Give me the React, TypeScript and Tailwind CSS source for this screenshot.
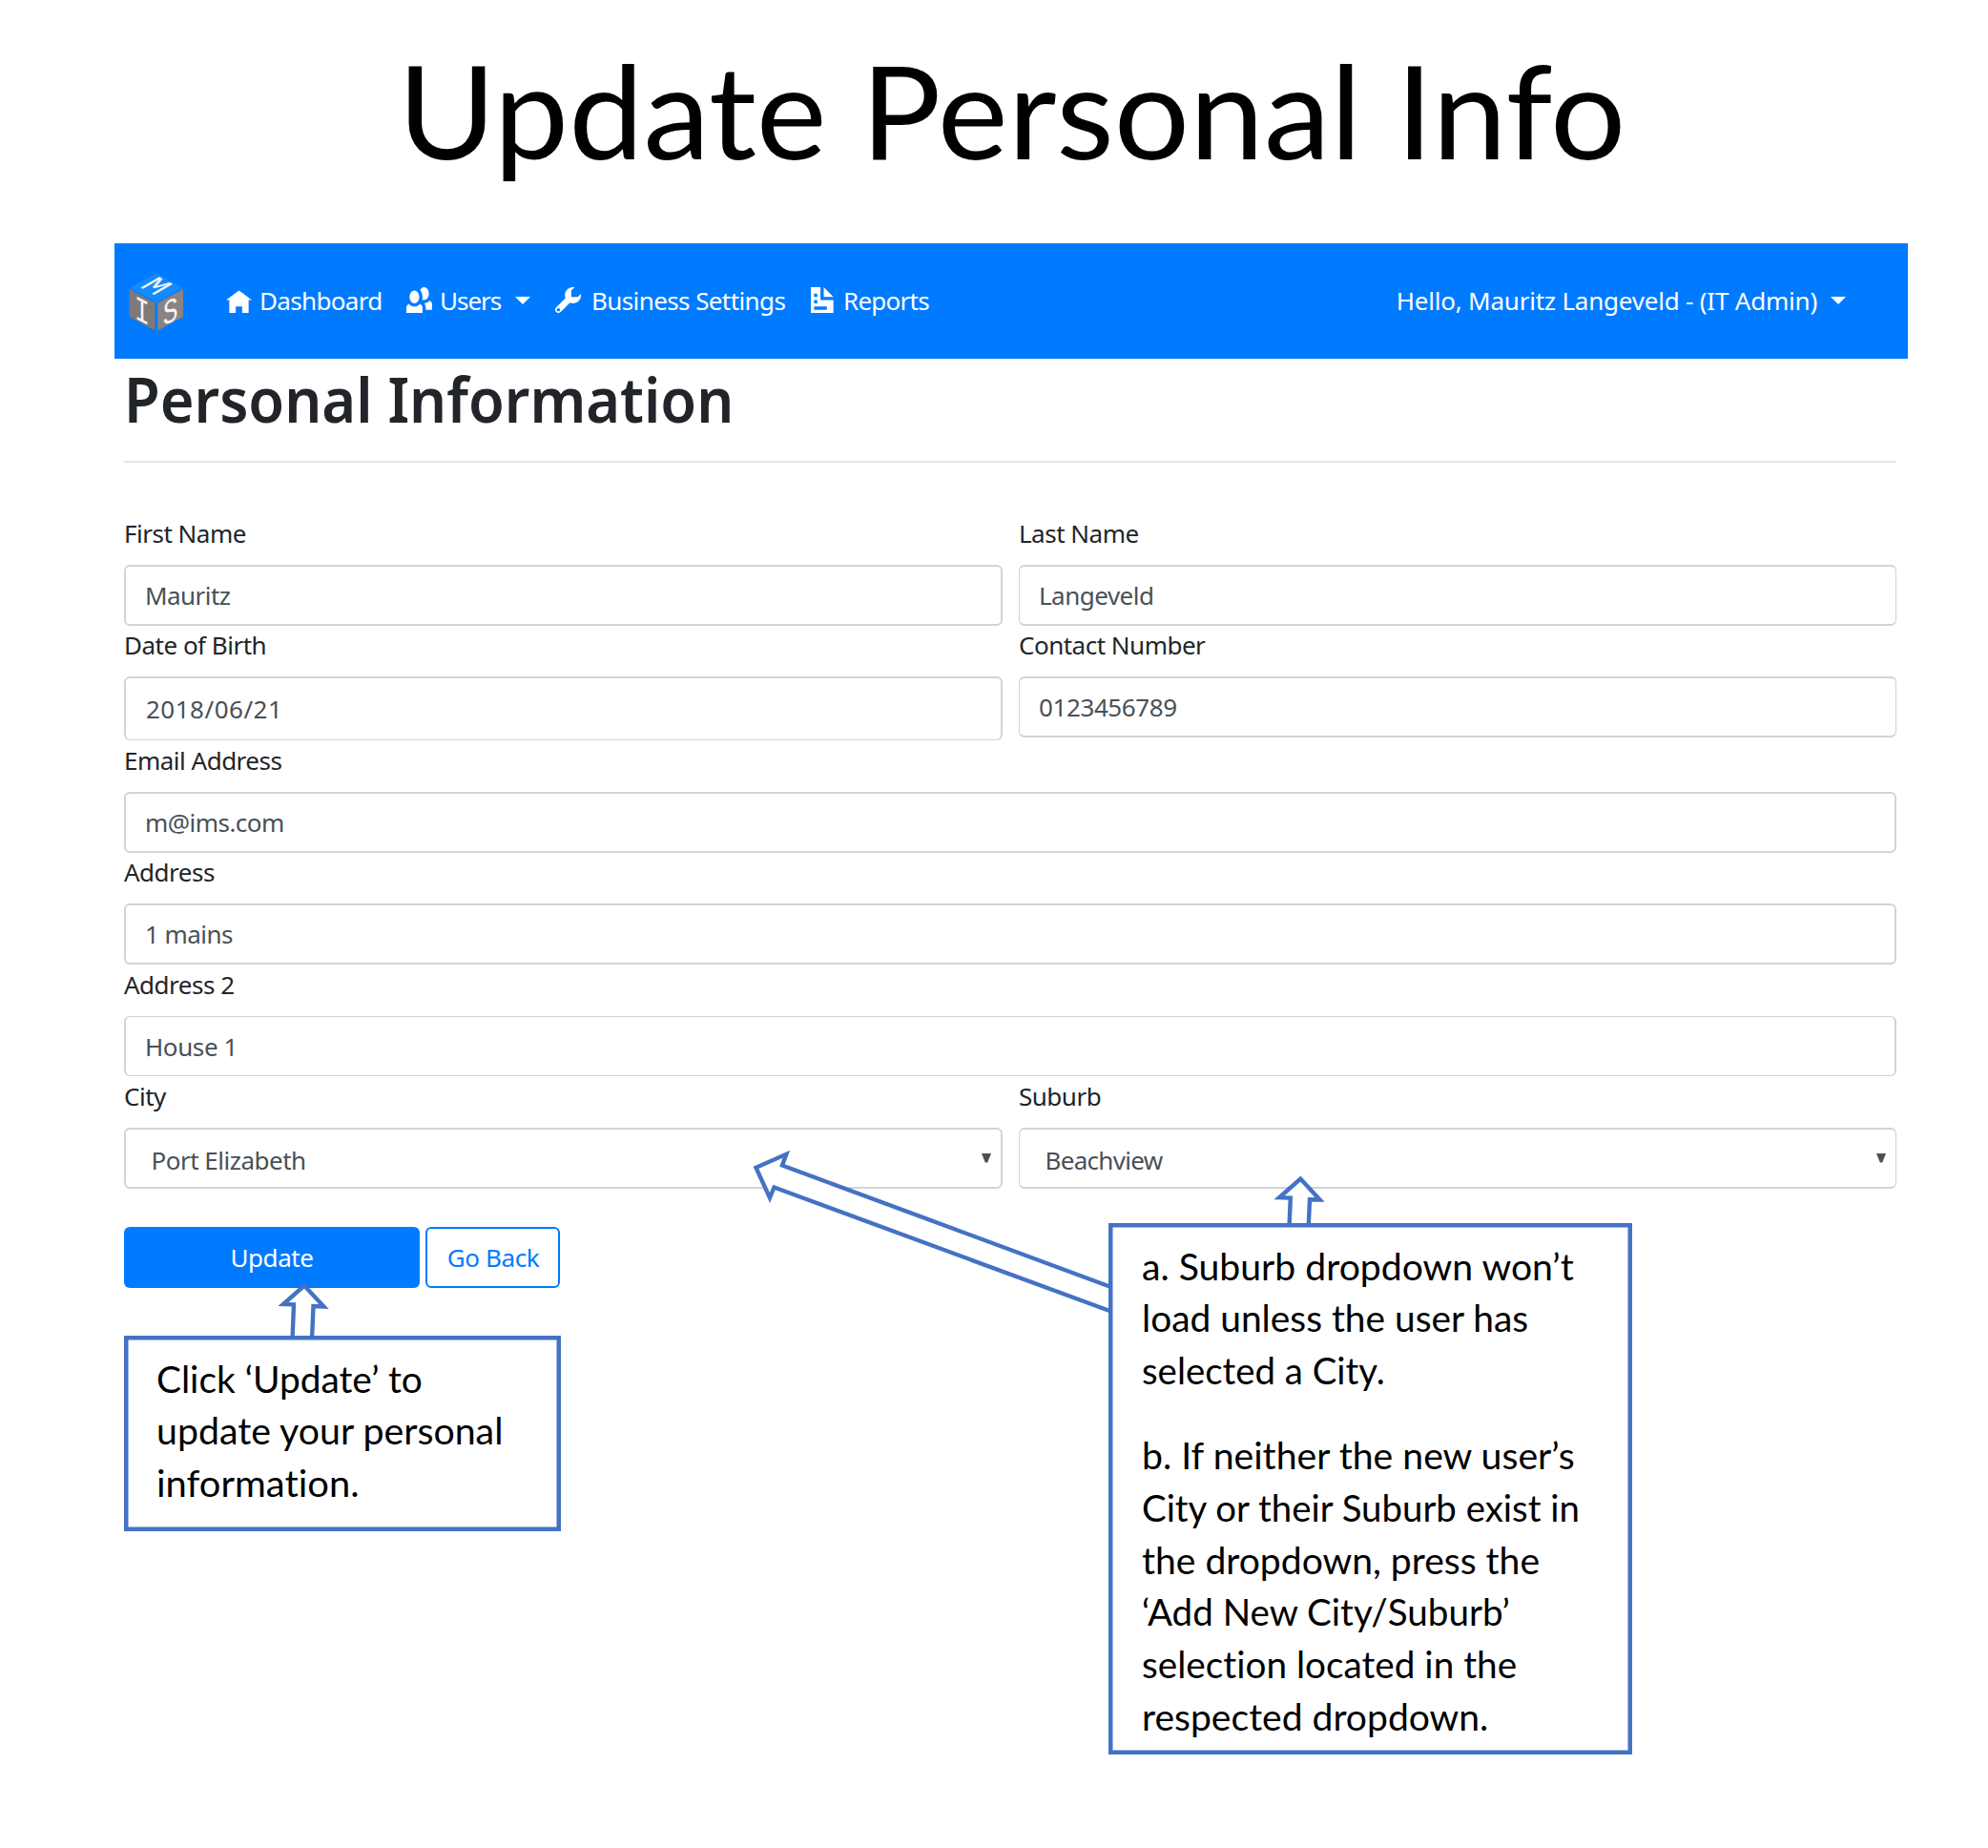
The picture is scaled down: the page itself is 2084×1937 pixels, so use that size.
import type { ReactNode } from "react";

function Glyph({ d, className }: { d: string; className: string }) {
  return (
    <svg viewBox="0 0 8 8" className={`h-[27px] w-[27px] shrink-0 fill-white ${className}`} aria-hidden="true">
      <path d={d} />
    </svg>
  );
}

const HOME = "M4 1l-4 3h1v4h2v-2h2v2h2v-4.03l1 .03-4-3z";
const PEOPLE =
  "M5.5 0c-.51 0-.95.35-1.22.88.45.54.72 1.28.72 2.13 0 .29-.03.55-.09.81.19.11.38.19.59.19.83 0 1.5-.9 1.5-2s-.67-2-1.5-2zm-3 1c-.83 0-1.5.9-1.5 2s.67 2 1.5 2 1.5-.9 1.5-2-.67-2-1.5-2zm4.75 3.16c-.43.51-1.02.82-1.69.84.27.38.44.84.44 1.34v.66h2v-1.66c0-.52-.31-.97-.75-1.19zm-6.5 1c-.44.22-.75.67-.75 1.19v1.66h5v-1.66c0-.52-.31-.97-.75-1.19-.45.53-1.06.84-1.75.84s-1.3-.32-1.75-.84z";
const WRENCH =
  "M5.5 0c-1.38 0-2.5 1.12-2.5 2.5 0 .32.08.62.19.91l-2.91 2.88c-.39.39-.39 1.05 0 1.44.2.2.46.28.72.28.26 0 .52-.09.72-.28l2.88-2.91c.28.11.58.19.91.19 1.38 0 2.5-1.11 2.5-2.5 0-.16 0-.32-.03-.47l-.97.97h-2v-2l.97-.97c-.15-.03-.31-.03-.47-.03zm-4.5 6.5c.28 0 .5.22.5.5s-.22.5-.5.5-.5-.22-.5-.5.22-.5.5-.5z";
const DOCUMENT = "M0 0v8h7v-4h-4v-4h-3zm4 0v3h3l-3-3zm-3 2h1v1h-1v-1zm0 2h1v1h-1v-1zm0 2h4v1h-4v-1z";

function Logo() {
  return (
    <svg viewBox="0 0 80 80" className="-mt-px ml-[5px] h-20 w-20 shrink-0 overflow-visible" aria-label="MIS">
      <path d="M39 11 66.8 27 39 42 10.8 27z" fill="#148aff" />
      <path d="M10.5 28 37.5 42.5v29L10.5 57z" fill="#7f7978" />
      <path d="M67 28 40.3 42.5v29L67 57z" fill="#8a8382" />
      <g fill="#f4f4f4" fontFamily="'Liberation Mono', monospace">
        <text fontSize="34" transform="matrix(.87 .47 -.87 .5 20.5 25.5)">M</text>
        <text fontSize="38" transform="matrix(.7 .36 0 .95 15.9 58.5)">I</text>
        <text fontSize="38" transform="matrix(.7 -.36 0 .95 45.8 67)">S</text>
      </g>
    </svg>
  );
}

function Caret({ className }: { className: string }) {
  return (
    <svg viewBox="0 0 16 8" className={`h-2 w-4 shrink-0 fill-white ${className}`} aria-hidden="true">
      <path d="M0 0h16L8 8z" />
    </svg>
  );
}

function Navbar() {
  return (
    <nav className="mx-[120px] flex h-[121px] w-[1880px] items-center bg-[#007bff] whitespace-nowrap text-white">
      <Logo />
      <a className="ml-8 flex w-[189px] items-center">
        <Glyph d={HOME} className="-mt-[3px]" />
        <span className="ml-[8px] tracking-[-0.66px]">Dashboard</span>
      </a>
      <a className="flex w-[156px] items-center">
        <Glyph d={PEOPLE} className="-mt-[3px]" />
        <span className="ml-[8px] tracking-[-1px]">Users</span>
        <Caret className="-mt-0.5 ml-[15px]" />
      </a>
      <a className="flex w-[267.5px] items-center">
        <Glyph d={WRENCH} className="-mt-[3px]" />
        <span className="ml-[11px] tracking-[-0.6px]">Business Settings</span>
      </a>
      <a className="flex items-center">
        <Glyph d={DOCUMENT} className="-mt-[3px]" />
        <span className="ml-[7.5px] tracking-[-0.75px]">Reports</span>
      </a>
      <a className="mr-[65px] ml-auto flex items-center">
        <span className="tracking-[-0.21px]">Hello, Mauritz Langeveld - (IT Admin)</span>
        <Caret className="-mt-0.5 ml-[14px]" />
      </a>
    </nav>
  );
}

function Field({ label, children }: { label: string; children: ReactNode }) {
  return (
    <div className="flex flex-col">
      <label className="mb-[13px] leading-10 tracking-[-0.5px] text-[#212529]">{label}</label>
      {children}
    </div>
  );
}

function TextInput({ value, className = "h-16 pl-5 tracking-[-0.55px]" }: { value: string; className?: string }) {
  return (
    <input
      readOnly
      value={value}
      className={`w-full rounded-md border-2 border-[#ced4da] bg-white pr-5 text-[#495057] outline-none ${className}`}
    />
  );
}

function SelectBox({ value, className }: { value: string; className: string }) {
  return (
    <div
      className={`flex h-16 w-full items-center justify-between rounded-md border-2 border-[#ced4da] bg-white pr-[10px] pl-[26.5px] text-[#495057] ${className}`}
    >
      <span className="mt-1">{value}</span>
      <svg viewBox="0 0 10 10" className="h-[10px] w-[10px] fill-[#495057]" aria-hidden="true">
        <path d="M0 0h10L6.2 9.5H3.8z" />
      </svg>
    </div>
  );
}

function ProfileForm() {
  return (
    <main className="ml-[130px] w-[1858px]">
      <h1 className="h-[83px] w-fit origin-left scale-x-[0.943] text-[65px] leading-[84px] font-semibold whitespace-nowrap text-[#212529]">
        Personal Information
      </h1>
      <hr className="mt-6 h-0.5 border-0 bg-[#e5e5e5]" />
      <form className="mt-[54px]">
        <div className="grid h-[117px] grid-cols-[921px_920px] gap-x-[17px]">
          <Field label="First Name">
            <TextInput value="Mauritz" />
          </Field>
          <Field label="Last Name">
            <TextInput value="Langeveld" className="h-16 border-x pl-5 tracking-[-0.5px]" />
          </Field>
        </div>
        <div className="grid h-[120px] grid-cols-[921px_920px] gap-x-[17px]">
          <Field label="Date of Birth">
            <TextInput value="2018/06/21" className="h-[67px] border-b pl-[21px] tracking-[0.5px]" />
          </Field>
          <Field label="Contact Number">
            <TextInput value="0123456789" className="h-16 border-x pl-5 tracking-[-0.4px]" />
          </Field>
        </div>
        <div className="h-[118px] pt-px">
          <Field label="Email Address">
            <TextInput value="m@ims.com" />
          </Field>
        </div>
        <div className="h-[117px]">
          <Field label="Address">
            <TextInput value="1 mains" />
          </Field>
        </div>
        <div className="h-[117px] pt-px">
          <Field label="Address 2">
            <TextInput value="House 1" className="h-[63px] border-y pl-5 tracking-[-0.4px]" />
          </Field>
        </div>
        <div className="grid h-[118px] grid-cols-[921px_920px] gap-x-[17px] pt-px">
          <Field label="City">
            <SelectBox value="Port Elizabeth" className="tracking-[-0.5px]" />
          </Field>
          <Field label="Suburb">
            <SelectBox value="Beachview" className="border-x tracking-[-0.7px]" />
          </Field>
        </div>
        <div className="mt-10 flex gap-[6px]">
          <button type="button" className="h-16 w-[310px] rounded-md bg-[#007bff] tracking-[-0.4px] text-white">
            Update
          </button>
          <button
            type="button"
            className="h-16 w-[141px] rounded-md border-2 border-[#007bff] bg-white pl-px tracking-[-0.4px] text-[#007bff]"
          >
            Go Back
          </button>
        </div>
      </form>
    </main>
  );
}

function Line({ children, className = "scale-x-[1.028]" }: { children: ReactNode; className?: string }) {
  return <span className={`block w-fit origin-left ${className}`}>{children}</span>;
}

function Note({ children, className }: { children: ReactNode; className: string }) {
  return (
    <aside
      className={`absolute border-4 border-[#4472c4] bg-white pt-[13.5px] font-['Lato',sans-serif] text-[38px] leading-[54.9px] whitespace-nowrap text-black shadow-[inset_0_0_0_0.5px_#4472c4] [font-variant-ligatures:none] ${className}`}
    >
      {children}
    </aside>
  );
}

function Annotations() {
  return (
    <>
      <svg
        viewBox="0 0 2084 1937"
        className="pointer-events-none absolute top-0 left-0 h-[1937px] w-[2084px]"
        fill="#fff"
        stroke="#4472c4"
        strokeWidth="4.4"
        strokeMiterlimit="10"
        aria-hidden="true"
      >
        <path d="M306.5 1404 308 1367.3 297 1367 319 1347.5 339.5 1369.5 328.5 1369 327 1404" />
        <path d="M1351.3 1290 1352.8 1255.6 1341 1255.3 1363.3 1235.5 1383.5 1257.5 1373 1257.2 1371.5 1290" />
        <path d="M1166 1349.5 820 1221.5 824.3 1209.8 792.5 1223.8 807 1255.5 811.5 1244.5 1166 1375" />
      </svg>
      <Note className="top-[1400px] left-[130px] h-[205px] w-[458px] pl-[30px]">
        <Line className="scale-x-[1.022]">Click ‘Update’ to</Line>
        <Line className="scale-x-[1.034]">update your personal</Line>
        <Line className="scale-x-[1.05]">information.</Line>
      </Note>
      <Note className="top-[1282px] left-[1162px] h-[557px] w-[549px] pl-[31px]">
        <p>
          <Line className="scale-x-[1.03]">a. Suburb dropdown won’t</Line>
          <Line className="scale-x-[1.023]">load unless the user has</Line>
          <Line className="scale-x-[1.01]">selected a City.</Line>
        </p>
        <p className="mt-[33.5px]">
          <Line className="scale-x-[1.031]">b. If neither the new user’s</Line>
          <Line className="scale-x-[1.01]">City or their Suburb exist in</Line>
          <Line>the dropdown, press the</Line>
          <Line className="scale-x-[1.015]">‘Add New City/Suburb’</Line>
          <Line className="scale-x-[1.019]">selection located in the</Line>
          <Line>respected dropdown.</Line>
        </p>
      </Note>
    </>
  );
}

export default function App() {
  return (
    <div className="relative h-[1937px] w-[2084px] overflow-hidden bg-white font-['Noto_Sans',sans-serif] text-[26px]">
      <header className="h-[255px] pl-[417px]">
        <div className="w-fit origin-left scale-x-[1.036] font-['Lato',sans-serif] text-[135px] leading-[231px] whitespace-nowrap text-black">
          Update Personal Info
        </div>
      </header>
      <Navbar />
      <ProfileForm />
      <Annotations />
    </div>
  );
}
